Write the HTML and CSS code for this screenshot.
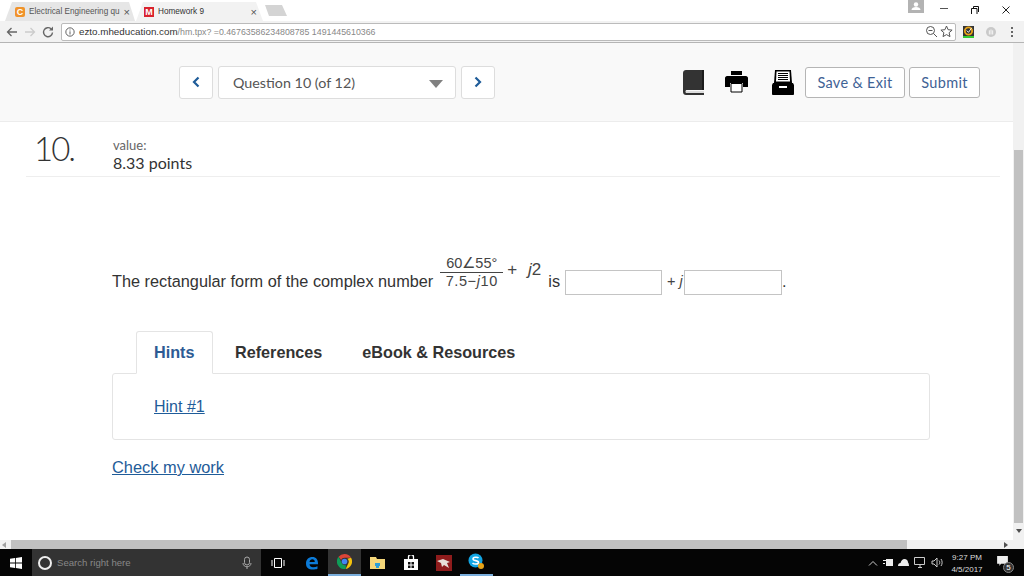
FILE: index.html
```html
<!DOCTYPE html>
<html lang="en">

<head>
  <meta charset="UTF-8" />
  <title>Homework 9</title>
  <link rel="stylesheet" href="styles.css">
</head>

<body>
  <!-- browser tabs -->
  <div class="tabbar">
    <div class="tab tab-off">
      <span class="favicon fav-c">C</span>
      <span class="tab-title">Electrical Engineering qu</span>
      <span class="tab-x">×</span>
    </div>
    <div class="tab tab-on">
      <span class="favicon fav-m">M</span>
      <span class="tab-title">Homework 9</span>
      <span class="tab-x">×</span>
    </div>
    <div class="tab-new"></div>
    <div class="win-controls">
      <span class="profile">
        <svg width="16" height="13" viewBox="0 0 16 13"><circle cx="8" cy="4.500" r="2.200" fill="#fff"/><path d="M3.500 10c0-2 2-3 4.500-3s4.500 1 4.500 3z" fill="#fff"/></svg>
      </span>
      <span class="win-btn"><svg width="8" height="8" viewBox="0 0 8 8"><path d="M0 2.500h8" stroke="#555"/></svg></span>
      <span class="win-btn"><svg width="8" height="8" viewBox="0 0 8 8"><path d="M.5 8V2.500h5.500V8M2.500 2V.5h5V6" stroke="#111" fill="none"/></svg></span>
      <span class="win-btn"><svg width="8" height="8" viewBox="0 0 8 8"><path d="M.5.500l7 7M7.500.500l-7 7" stroke="#222"/></svg></span>
    </div>
  </div>

  <!-- address bar -->
  <div class="toolbar">
    <svg class="tool-icon" width="14" height="14" viewBox="0 0 14 14"><path d="M12 7H2.500M6.500 3L2.500 7l4 4" stroke="#666" stroke-width="1.300" fill="none"/></svg>
    <svg class="tool-icon" width="14" height="14" viewBox="0 0 14 14"><path d="M2 7h9.500M7.500 3l4 4-4 4" stroke="#ccc" stroke-width="1.300" fill="none"/></svg>
    <svg class="tool-icon" width="14" height="14" viewBox="0 0 14 14"><path d="M11.500 7.500A4.500 4.500 0 1 1 10 3.800" stroke="#666" stroke-width="1.400" fill="none"/><path d="M12 1.500v4H8z" fill="#666"/></svg>
    <div class="omnibox">
      <svg width="10" height="10" viewBox="0 0 12 12"><circle cx="6" cy="6" r="5" stroke="#444" fill="none"/><path d="M6 5.200V9M6 3v1.200" stroke="#444"/></svg>
      <span class="url"><b>ezto.mheducation.com</b>/hm.tpx? =0.46763586234808785 1491445610366</span>
      <svg class="omni-zoom" width="13" height="13" viewBox="0 0 13 13"><circle cx="5.500" cy="5.500" r="4" stroke="#555" fill="none"/><path d="M8.500 8.500l3.500 3.500M3.500 5.500h4" stroke="#555"/></svg>
      <svg width="13" height="13" viewBox="0 0 13 13"><path d="M6.500 1l1.600 3.700 4 .4-3 2.600.9 3.900-3.500-2-3.500 2 .9-3.900-3-2.600 4-.4z" stroke="#555" fill="none"/></svg>
    </div>
    <span class="ext-norton">
      <svg width="11" height="10" viewBox="0 0 12 11"><circle cx="6" cy="5.500" r="4" stroke="#e8a317" stroke-width="2" fill="none"/><path d="M4 5l2 2 3.500-5" stroke="#fff" fill="none"/></svg>
    </span>
    <span class="ext-gray">
      <svg width="10" height="10" viewBox="0 0 12 12"><circle cx="6" cy="6" r="6" fill="#c9c9c9"/><path d="M4 9V4M6 9V3M8 9V4" stroke="#fff"/></svg>
    </span>
    <span class="kebab"><i></i><i></i><i></i></span>
  </div>

  <div class="page">
    <div class="page-main">
      <!-- assignment header -->
      <header class="quiz-head">
        <div class="quiz-nav">
          <button class="nav-btn"><svg width="10" height="12" viewBox="0 0 10 12"><path d="M7.500 1.500L3 6l4.500 4.500" stroke="#1f5c99" stroke-width="2.200" fill="none"/></svg></button>
          <div class="question-select">
            <span>Question 10 (of 12)</span>
            <span class="caret"></span>
          </div>
          <button class="nav-btn"><svg width="10" height="12" viewBox="0 0 10 12"><path d="M2.500 1.500L7 6l-4.500 4.500" stroke="#1f5c99" stroke-width="2.200" fill="none"/></svg></button>
        </div>
        <div class="quiz-actions">
          <svg class="act-book" width="21" height="25" viewBox="0 0 21 25"><path d="M3 0h18v20H4c-1 0-1.500.5-1.500 1.500S3 23 4 23h17v2H3c-1.700 0-3-1-3-3V3c0-2 1.300-3 3-3z" fill="#333"/><path d="M19 0h2v20h-2z" fill="#1c1c1c"/><path d="M3 21h18v2H3z" fill="#ddd"/></svg>
          <svg class="act-print" width="23" height="22" viewBox="0 0 23 22"><path d="M6 0h11v4H6z" fill="#000"/><path d="M2 5h19c1 0 2 1 2 2v9h-5v-4H5v4H0V7c0-1 1-2 2-2z" fill="#000"/><path d="M6 12.500h11v8.500H6z" fill="#fff" stroke="#000"/></svg>
          <svg class="act-drawer" width="22" height="25" viewBox="0 0 22 25"><path d="M3 0h16l1 13H2z" fill="#000"/><path d="M4.500 1.500h13l.5 10H4z" fill="#fff"/><path d="M6 3.500h10M6 5.500h10M6 7.500h10M6 9.500h10" stroke="#000"/><path d="M1 13h20l1 2v9c0 .5-.5 1-1 1H1c-.5 0-1-.5-1-1v-9z" fill="#000"/><path d="M7 16h8v2H7z" fill="#fff"/></svg>
          <button class="btn-outline btn-save">Save &amp; Exit</button>
          <button class="btn-outline btn-submit">Submit</button>
        </div>
      </header>

      <section class="question">
        <div class="q-top">
          <div class="q-num">10.</div>
          <div class="q-value">
            <div class="value-label">value:</div>
            <div class="value-points">8.33 points</div>
          </div>
        </div>

        <div class="q-body">
          <span class="q-text">The rectangular form of the complex number</span>
          <span class="frac">
            <span class="frac-top">60∠55°</span>
            <span class="frac-bottom">7.5−<i>j</i>10</span>
          </span>
          <span class="plus-j">+ <i>j</i>2</span>
          <span class="q-text is">is</span>
          <input class="answer answer-a" type="text">
          <span class="q-text plus">+ <i>j</i></span><input class="answer answer-b" type="text"><span class="q-text">.</span>
        </div>

        <div class="tabs">
          <a class="res-tab res-tab-on">Hints</a>
          <a class="res-tab">References</a>
          <a class="res-tab">eBook &amp; Resources</a>
        </div>
        <div class="tab-panel">
          <a class="hint-link" href="#">Hint #1</a>
        </div>
        <a class="check-link" href="#">Check my work</a>
      </section>
    </div>

    <div class="v-scroll">
      <span class="v-spacer"></span>
      <span class="v-thumb"></span>
      <span class="v-arrow"></span>
    </div>
  </div>

  <div class="h-scroll">
    <span class="h-arrow-l"></span>
    <span class="h-thumb"></span>
    <span class="h-arrow-r"></span>
  </div>

  <!-- windows taskbar -->
  <div class="taskbar">
    <span class="start">
      <svg width="12" height="12" viewBox="0 0 12 12"><path d="M0 1.800L5 1v4.600H0zM5.800.9L12 0v5.600H5.800zM0 6.400h5V11l-5-.8zM5.800 6.400H12V12l-6.200-.9z" fill="#fff"/></svg>
    </span>
    <div class="search">
      <span class="cortana"></span>
      <span class="search-text">Search right here</span>
      <svg class="mic" width="10" height="14" viewBox="0 0 10 14"><rect x="2.500" y="1" width="5" height="8" rx="2.500" stroke="#aaa" fill="none"/><path d="M1 7c0 5 8 5 8 0M5 11v2" stroke="#aaa" fill="none"/></svg>
    </div>
    <span class="task-app task-view"><svg width="14" height="12" viewBox="0 0 14 12"><path d="M3.500 1.500h7v9h-7zM1 3v6M13 3v6" stroke="#fff" fill="none"/></svg></span>
    <span class="task-app"><svg width="14" height="14" viewBox="0 0 14 14"><path d="M1 7.500C1 3.500 3.500 1 7.500 1c3.500 0 5.500 2.500 5.500 6.500v.8H4.500c.2 2 1.500 3 3.500 3 1.800 0 3.300-.4 4.500-1.100v2.500c-1.300.6-2.800.8-4.700.8C3.500 13.500 1 11.500 1 7.500zM4.500 6h5.300c0-1.800-1-2.700-2.500-2.700S4.800 4.200 4.500 6z" fill="#0c7bd8"/></svg></span>
    <span class="task-app task-chrome"><svg width="15" height="15" viewBox="0 0 16 16"><path d="M8 0a8 8 0 0 1 7 4H8a4 4 0 0 0-3.700 2.500L1.700 3A8 8 0 0 1 8 0z" fill="#db4437"/><path d="M15 4a8 8 0 0 1-5.800 11.900L12 10a4 4 0 0 0-1-5z" fill="#f4c20d"/><path d="M1.700 3L5 9.500A4 4 0 0 0 9.500 12l-.3 3.900A8 8 0 0 1 1.700 3z" fill="#0f9d58"/><circle cx="8" cy="8" r="3" fill="#4285f4"/></svg></span>
    <span class="task-app"><svg width="15" height="13" viewBox="0 0 15 13"><path d="M0 1h6l1 2h8v10H0z" fill="#f5d77a"/><path d="M5 7h5v3H9v2H6v-2H5z" fill="#2d9fd8"/></svg></span>
    <span class="task-app"><svg width="14" height="15" viewBox="0 0 14 15"><path d="M0 4h14v11H0z" fill="#fff"/><path d="M4.500 4V2a2 2 0 0 1 5 0v2" stroke="#fff" stroke-width="1.300" fill="none"/><path d="M4 7h2.500v2.500H4zM7.500 7H10v2.500H7.500zM4 10.500h2.500V13H4zM7.500 10.500H10V13H7.500z" fill="#111"/></svg></span>
    <span class="task-app"><svg width="16" height="16" viewBox="0 0 16 16"><path d="M0 0h16v16H0z" fill="#8f1c1c"/><path d="M1 6l6-2 7 3-3 1 2 5-5-3-2 2-1-4z" fill="#e8e0d8"/></svg></span>
    <span class="task-app task-skype"><svg width="17" height="17" viewBox="0 0 17 17"><circle cx="7.500" cy="7.500" r="7" fill="#12a5e3"/><path d="M10.500 5C9.500 3.800 5 3.800 5 6c0 2.300 5.500 1 5.500 3.500C10.500 11.500 6 11.500 4.500 10" stroke="#fff" stroke-width="1.600" fill="none"/><circle cx="13" cy="13" r="3" fill="#e8a317"/></svg></span>
    <div class="tray">
      <svg width="10" height="6" viewBox="0 0 10 6"><path d="M1 5.500l4-4 4 4" stroke="#ccc" fill="none"/></svg>
      <svg width="10" height="7" viewBox="0 0 10 7"><path d="M3 0h7v7H3zM0 1h3v1H0zM0 4h2v1H0z" fill="#eee"/></svg>
      <svg width="11" height="7" viewBox="0 0 11 7"><path d="M0 7c0-2 1-3 2.500-3C3 2 4.500 0 6.500 0S10 1.500 10 3.500c.7.500 1 2 1 3.500z" fill="#eee"/></svg>
      <svg width="12" height="11" viewBox="0 0 12 11"><path d="M.5.500h10v7H.5zM4 10.500h4M6 8v2" stroke="#ccc" fill="none"/></svg>
      <svg width="12" height="11" viewBox="0 0 12 11"><path d="M1 4h2l3-3v9L3 7H1zM8 3.500c1 1 1 3 0 4M10 2c1.500 2 1.500 5 0 7" stroke="#ccc" fill="none"/></svg>
      <div class="clock">
        <div>9:27 PM</div>
        <div>4/5/2017</div>
      </div>
      <span class="notify">
        <svg width="11" height="10" viewBox="0 0 14 13"><path d="M0 0h14v10H5l-2 3v-3H0z" fill="#eee"/></svg>
        <span class="notify-badge">5</span>
      </span>
    </div>
  </div>
</body>

</html>
```

FILE: styles.css
```css
* { margin: 0; padding: 0; box-sizing: border-box; }
html, body { width: 1024px; height: 576px; overflow: hidden; }
body {
  font-family: 'Liberation Sans', sans-serif;
  background: white;
  color: #333;
  display: flex; flex-direction: column;
}
svg { display: block; }

/* browser tabs */
.tabbar {
  height: 21px; display: flex; align-items: flex-end;
  background: #fff; padding-left: 5px;
}
.tab {
  height: 19px; display: flex; align-items: center; gap: 4px;
  font-size: 8.200px;
}
.tab-off {
  width: 130px; padding: 0 6px 0 10px; background: #e6e6e6;
  clip-path: polygon(0 100%, 7px 0, 124px 0, 130px 100%);
  color: #555;
}
.tab-on {
  width: 127px; padding: 0 6px 0 8px; margin-left: 1px; color: #333;
  background: #f2f2f2;
  clip-path: polygon(0 100%, 7px 0, 120px 0, 127px 100%);
}
.favicon {
  width: 10px; height: 10px; flex: none; color: white;
  font-weight: bold; font-size: 9px; line-height: 10px; text-align: center;
}
.fav-c { background: #f0932b; border-radius: 2px; }
.fav-m { background: #d9232e; }
.tab-title { flex: 1; white-space: nowrap; }
.tab-x { color: #555; font-size: 11px; }
.tab-new {
  width: 22px; height: 11px; margin: 0 0 5px 2px; background: #d4d4d4;
  clip-path: polygon(0 0, 17px 0, 22px 100%, 4px 100%);
}
.win-controls {
  margin-left: auto; height: 21px; padding-right: 14px;
  display: flex; align-items: flex-start; gap: 23px;
}
.profile {
  width: 16px; height: 13px; background: #b3b3b3; margin-right: -7px;
}
.win-btn { width: 8px; padding-top: 6px; }

/* address bar */
.toolbar {
  height: 22px; background: #f2f2f2; border-bottom: 1px solid #b5b5b5;
  display: flex; align-items: center; padding-left: 5px;
}
.tool-icon { margin-right: 4px; }
.omnibox {
  width: 895px; height: 18px; margin-left: 2px; background: white;
  border: 1px solid #bbb; border-radius: 2px;
  display: flex; align-items: center; gap: 4px; padding: 0 2px 0 3px;
}
.url {
  flex: 1; font-size: 8.800px; color: #888; white-space: nowrap;
}
.url b { font-weight: normal; font-size: 9.800px; color: #333; }
.omni-zoom { margin-right: -2px; }
.ext-norton {
  width: 11px; height: 12px; margin-left: 7px; background: #333;
  border-bottom: 2px solid #33cc33;
}
.ext-gray { margin-left: 12px; }
.kebab { margin-left: 15px; display: flex; flex-direction: column; gap: 2px; }
.kebab i { width: 2px; height: 2px; background: #666; display: block; }

/* page and scrollbars */
.page { flex: 1; display: flex; min-height: 0; }
.page-main { flex: 1; min-width: 0; }
.v-scroll {
  width: 11px; background: #f1f1f1; display: flex; flex-direction: column;
}
.v-spacer { height: 107px; }
.v-thumb { height: 373px; margin-left: 1px; margin-right: 1px; background: #c1c1c1; }
.v-arrow {
  margin: 6px auto 0; width: 0; height: 0;
  border: 3px solid transparent; border-top: 4px solid #505050;
}
.h-scroll { height: 9px; background: #f1f1f1; display: flex; align-items: center; }
.h-arrow-l {
  width: 0; height: 0; margin: 0 3px 0 2px;
  border: 3px solid transparent; border-right: 4px solid #a0a0a0; border-left: 0;
}
.h-thumb { width: 896px; height: 9px; margin-left: 2px; background: #c1c1c1; }
.h-arrow-r {
  width: 0; height: 0; margin-left: 97px;
  border: 3px solid transparent; border-left: 4px solid #505050; border-right: 0;
}

/* assignment header */
.quiz-head {
  height: 79px; background: #f9f9f9; border-bottom: 1px solid #ececec;
  display: flex; align-items: center; justify-content: space-between;
  padding: 0 33px 0 179px; font-family: 'Lato', 'Open Sans', sans-serif;
}
.quiz-nav { display: flex; gap: 5px; }
.nav-btn {
  width: 34px; height: 33px; background: white; cursor: pointer;
  border: 1px solid #ddd; border-radius: 3px;
  display: flex; align-items: center; justify-content: center;
}
.question-select {
  width: 238px; height: 33px; background: white; color: #555;
  border: 1px solid #ddd; border-radius: 3px; font-size: 14.300px;
  display: flex; align-items: center; justify-content: space-between;
  padding: 0 12px 0 14px;
}
.caret {
  margin-top: 3px;
  border: 7px solid transparent; border-top: 8px solid #808080;
  border-bottom: 0;
}
.quiz-actions { display: flex; align-items: center; }
.act-print { margin-left: 21px; }
.act-drawer { margin-left: 24px; }
.btn-outline {
  height: 31px; background: white; color: #3f6295; font-size: 14.500px;
  font-family: 'Lato', 'Open Sans', sans-serif; letter-spacing: .3px;
  border: 1px solid #b5b5b5; border-radius: 3px; cursor: pointer;
}
.btn-save { width: 100px; margin-left: 11px; }
.btn-submit { width: 71px; margin-left: 4px; }

/* question */
.question { padding: 0 13px 0 26px; }
.q-top {
  height: 55px; display: flex; align-items: flex-start;
  border-bottom: 1px solid #eee; padding: 6px 0 0 8px;
}
.q-num {
  width: 79px; font-family: 'Lato', sans-serif; font-size: 33px; color: #333;
  line-height: 40px; letter-spacing: -2px; font-weight: 300;
}
.q-value { margin-top: 10px; font-family: 'Lato', sans-serif; }
.value-label { font-size: 13px; color: #666; line-height: 14px; margin-bottom: 2px; }
.value-points { font-size: 16px; color: #333; line-height: 18px; }
.q-body {
  height: 118px; padding-left: 86px; display: flex; align-items: flex-end;
  color: #333; white-space: nowrap;
}
.q-text { font-size: 16.300px; line-height: 19px; margin-bottom: 4px; }
.frac {
  margin: 0 0 6px 7px; display: flex; flex-direction: column; align-items: center;
  font-size: 14.500px; color: #444; line-height: 15px;
}
.frac-top { border-bottom: 1px solid #444; padding-bottom: 1px; width: 63px; text-align: center; }
.frac-bottom { padding-top: 1px; letter-spacing: .6px; }
.plus-j {
  width: 36px; margin: 0 0 16px 4px; font-size: 17px; line-height: 18px;
  color: #444; word-spacing: 6px;
}
.is { margin-left: 5px; }
.answer {
  height: 25px; background: white; border: 1px solid #c4c4c4;
}
.answer-a { width: 97px; margin-left: 5px; }
.answer-b { width: 98px; }
.plus { width: 17px; margin-left: 5px; font-size: 14.500px; color: #444; }

.tabs { margin: 36px 0 -1px 110px; display: flex; position: relative; }
.res-tab {
  height: 43px; padding: 0 18px; margin-right: 4px;
  display: flex; align-items: center;
  font-size: 16.200px; font-weight: bold; color: #333;
}
.res-tab-on {
  width: 77px; color: #2d5b94; background: white;
  border: 1px solid #e4e4e4; border-bottom: 1px solid white;
  border-radius: 3px 3px 0 0;
  padding-left: 17px;
}
.tab-panel {
  width: 818px; height: 67px; margin-left: 86px;
  border: 1px solid #e4e4e4; border-radius: 3px;
  padding: 24px 0 0 41px;
}
.hint-link, .check-link { color: #1f5c99; font-size: 16px; }
.check-link { display: inline-block; margin: 18px 0 0 86px; font-size: 16.400px; }

/* windows taskbar */
.taskbar {
  height: 27px; background: #050505; display: flex; align-items: center;
}
.start {
  width: 32px; height: 27px; display: flex;
  align-items: center; justify-content: center;
}
.search {
  width: 229px; height: 27px; background: #333;
  display: flex; align-items: center; padding: 0 6px;
}
.cortana {
  width: 14px; height: 14px; border: 2px solid #eee; border-radius: 50%;
  flex: none;
}
.search-text { flex: 1; margin-left: 5px; color: #888; font-size: 9.600px; }
.mic { margin-right: 3px; }
.task-app {
  width: 33px; height: 27px; display: flex;
  align-items: center; justify-content: center;
}
.task-view { margin-right: 1px; }
.task-chrome { background: #333; border-bottom: 2px solid #7aaedc; }
.task-skype { border-bottom: 2px solid #7aaedc; }
.tray {
  margin-left: auto; display: flex; align-items: center; gap: 5px;
  padding-right: 10px; color: #ddd;
}
.clock {
  width: 42px; margin: 0 1px 0 -2px; padding-top: 2px; text-align: center;
  font-size: 8px; line-height: 12px;
}
.notify { width: 20px; height: 20px; position: relative; display: block; padding: 3px 0 0 3px; }
.notify-badge {
  position: absolute; right: 0; bottom: 0; width: 11px; height: 11px;
  border-radius: 50%; background: #333; border: 1px solid #888;
  color: white; font-size: 8px; line-height: 9px; text-align: center;
}
```
